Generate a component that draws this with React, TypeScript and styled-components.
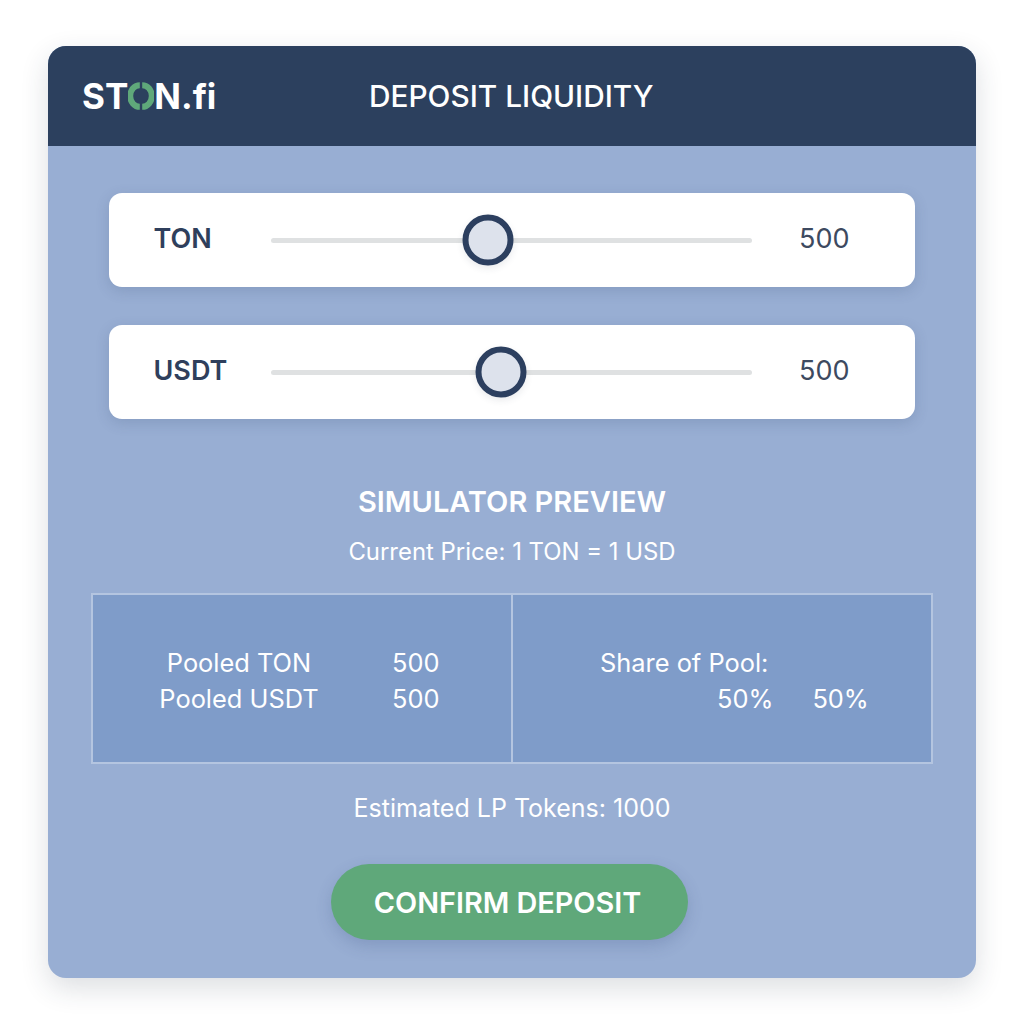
import React from "react";
import styled, { createGlobalStyle } from "styled-components";

const Global = createGlobalStyle`
  html, body { margin: 0; padding: 0; background: #fff; }
  body { font-family: Inter, "Liberation Sans", sans-serif; }
`;

const Page = styled.div`
  width: 1024px;
  height: 1024px;
  box-sizing: border-box;
  padding: 46px 48px;
  overflow: hidden;
`;

const Card = styled.main`
  height: 932px;
  border-radius: 18px;
  overflow: hidden;
  background: #98aed3;
  box-shadow: 0 10px 28px rgba(40, 50, 70, 0.16);
  display: flex;
  flex-direction: column;
`;

const Header = styled.header`
  height: 100px;
  flex: none;
  background: #2c405e;
  display: flex;
  align-items: center;
  padding-left: 34px;
  color: #fff;
`;

const Logo = styled.div`
  width: 287px;
  flex: none;
  display: flex;
  align-items: center;
  font-size: 35px;
  font-weight: 700;
  line-height: 1;
`;

const LogoRing = styled.svg`
  width: 26px;
  height: 28px;
  flex: none;
`;

const Title = styled.h1`
  margin: 0;
  font-size: 29.8px;
  font-weight: 500;
`;

const Body = styled.div`
  flex: 1;
  display: flex;
  flex-direction: column;
  align-items: center;
  padding-top: 47px;
`;

const SliderCard = styled.section`
  width: 806px;
  height: 94px;
  box-sizing: border-box;
  background: #fff;
  border-radius: 13px;
  box-shadow: 0 4px 14px rgba(50, 70, 110, 0.18);
  margin-bottom: 38px;
  padding-left: 44.5px;
  display: flex;
  align-items: center;
`;

const TokenLabel = styled.span`
  width: 117.5px;
  flex: none;
  font-size: 27px;
  font-weight: 600;
  color: #2f3f5c;
  position: relative;
  top: -1.5px;
`;

const Track = styled.div`
  width: 481px;
  height: 5px;
  flex: none;
  background: #dfe1e2;
  border-radius: 3px;
  position: relative;
`;

const Thumb = styled.div`
  position: absolute;
  top: 50%;
  width: 51px;
  height: 51px;
  box-sizing: border-box;
  border: 6px solid #2c3f5f;
  border-radius: 50%;
  background: #dde2ec;
  box-shadow: 0 3px 7px rgba(50, 60, 80, 0.1);
  transform: translate(-50%, -50%);
`;

const TokenValue = styled.span`
  margin-left: 47px;
  font-size: 27px;
  font-weight: 400;
  color: #3d4a60;
  position: relative;
  top: -1.5px;
`;

const PreviewTitle = styled.h2`
  margin: 27px 0 0;
  font-size: 29px;
  line-height: 36px;
  font-weight: 600;
  color: #fff;
`;

const PriceLine = styled.p`
  margin: 18px 0 0;
  font-size: 23.9px;
  line-height: 28px;
  color: #fff;
`;

const Table = styled.div`
  width: 842px;
  height: 171px;
  box-sizing: border-box;
  margin-top: 27px;
  background: #7f9cc9;
  border: 2px solid #b4c5e0;
  display: grid;
  grid-template-columns: 420px 1fr;
  color: #fff;
  font-size: 25.4px;
  line-height: 36px;
`;

const PoolCell = styled.div`
  display: grid;
  grid-template-columns: 246px 1fr;
  align-content: center;
  padding-top: 5px;
  border-right: 2px solid #b4c5e0;
  box-sizing: border-box;
`;

const PoolLabel = styled.span`
  justify-self: center;
  margin-left: 46px;
`;

const PoolValue = styled.span`
  margin-left: 53px;
`;

const ShareCell = styled.div`
  display: flex;
  flex-direction: column;
  justify-content: center;
  padding-top: 5px;
`;

const ShareTitle = styled.span`
  margin-left: 87px;
`;

const ShareValues = styled.div`
  display: flex;
  gap: 39px;
  margin-left: 204px;
`;

const Estimate = styled.p`
  margin: 30px 0 0;
  font-size: 25px;
  line-height: 28px;
  color: #fff;
`;

const ConfirmButton = styled.button`
  width: 357px;
  height: 76px;
  margin: 42px 0 0 -5px;
  padding: 0 4px 0 0;
  border: none;
  border-radius: 38px;
  background: #5fa87a;
  color: #fff;
  font-family: inherit;
  font-size: 28.8px;
  font-weight: 600;
  box-shadow: 0 6px 16px rgba(50, 70, 120, 0.2);
`;

const tokens = [
  { name: "TON", value: 500, thumb: 217 },
  { name: "USDT", value: 500, thumb: 230 },
];

export default function App() {
  return (
    <Page>
      <Global />
      <Card>
        <Header>
          <Logo>
            ST
            <LogoRing viewBox="0 0 26 28" aria-hidden="true">
              <path d="M11.8 3.2 A9.6 10.8 0 0 0 11.8 24.8" fill="none" stroke="#5fa87a" strokeWidth="6" />
              <path d="M14.2 3.2 A9.6 10.8 0 0 1 14.2 24.8" fill="none" stroke="#5fa87a" strokeWidth="6" />
            </LogoRing>
            N.fi
          </Logo>
          <Title>DEPOSIT LIQUIDITY</Title>
        </Header>
        <Body>
          {tokens.map((t) => (
            <SliderCard key={t.name}>
              <TokenLabel>{t.name}</TokenLabel>
              <Track>
                <Thumb style={{ left: t.thumb }} />
              </Track>
              <TokenValue>{t.value}</TokenValue>
            </SliderCard>
          ))}
          <PreviewTitle>SIMULATOR PREVIEW</PreviewTitle>
          <PriceLine>Current Price: 1 TON = 1 USD</PriceLine>
          <Table>
            <PoolCell>
              <PoolLabel>Pooled TON</PoolLabel>
              <PoolValue>500</PoolValue>
              <PoolLabel>Pooled USDT</PoolLabel>
              <PoolValue>500</PoolValue>
            </PoolCell>
            <ShareCell>
              <ShareTitle>Share of Pool:</ShareTitle>
              <ShareValues>
                <span>50%</span>
                <span>50%</span>
              </ShareValues>
            </ShareCell>
          </Table>
          <Estimate>Estimated LP Tokens: 1000</Estimate>
          <ConfirmButton>CONFIRM DEPOSIT</ConfirmButton>
        </Body>
      </Card>
    </Page>
  );
}
